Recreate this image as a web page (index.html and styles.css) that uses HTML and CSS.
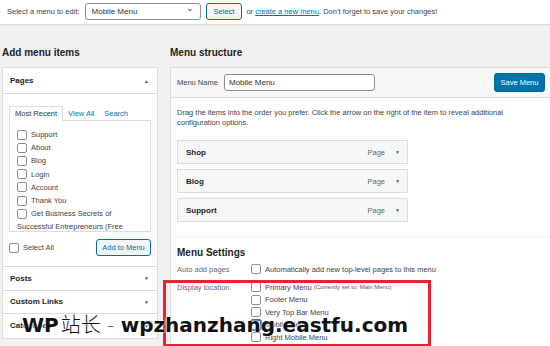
FILE: index.html
```html
<!DOCTYPE html>
<html lang="en">
<head>
  <meta charset="UTF-8">
  <title>Menus</title>
  <link rel="stylesheet" href="styles.css">
</head>
<body class="page">
  <div class="topbar">
    <span class="topbar__label">Select a menu to edit:</span>
    <span class="select">Mobile Menu<span class="select__chevron">&#8964;</span></span>
    <span class="btn btn--secondary">Select</span>
    <span class="topbar__text">or <a class="link" href="#">create a new menu</a>. Don&rsquo;t forget to save your changes!</span>
  </div>

  <div class="columns">
    <div class="col col--left">
      <h2 class="col__title">Add menu items</h2>
      <div class="box">
        <div class="box__head">Pages<span class="box__arrow">&#9650;</span></div>
        <div class="box__inner">
          <div class="tabs">
            <span class="tabs__tab tabs__tab--active">Most Recent</span>
            <span class="tabs__tab">View All</span>
            <span class="tabs__tab">Search</span>
          </div>
          <ul class="tabs__panel">
            <li class="check"><input class="check__box" type="checkbox">Support</li>
            <li class="check"><input class="check__box" type="checkbox">About</li>
            <li class="check"><input class="check__box" type="checkbox">Blog</li>
            <li class="check"><input class="check__box" type="checkbox">Login</li>
            <li class="check"><input class="check__box" type="checkbox">Account</li>
            <li class="check"><input class="check__box" type="checkbox">Thank You</li>
            <li class="check"><input class="check__box" type="checkbox">Get Business Secrets of</li>
            <li class="check">Successful Entrepreneurs (Free</li>
          </ul>
          <div class="box__actions">
            <label class="check"><input class="check__box" type="checkbox">Select All</label>
            <span class="btn btn--secondary btn--add">Add to Menu</span>
          </div>
        </div>
        <div class="box__head box__head--closed">Posts<span class="box__arrow">&#9660;</span></div>
        <div class="box__head box__head--closed">Custom Links<span class="box__arrow">&#9660;</span></div>
        <div class="box__head box__head--closed">Categories<span class="box__arrow">&#9660;</span></div>
      </div>
    </div>

    <div class="col col--right">
      <h2 class="col__title">Menu structure</h2>
      <div class="menu">
        <div class="menu__head">
          <span class="menu__label">Menu Name</span>
          <span class="menu__input">Mobile Menu</span>
          <span class="btn btn--primary">Save Menu</span>
        </div>
        <div class="menu__body">
          <p class="menu__desc">Drag the items into the order you prefer. Click the arrow on the right of the item to reveal additional configuration options.</p>
          <div class="item"><span class="item__title">Shop</span><span class="item__type">Page</span><span class="item__arrow">&#9660;</span></div>
          <div class="item"><span class="item__title">Blog</span><span class="item__type">Page</span><span class="item__arrow">&#9660;</span></div>
          <div class="item"><span class="item__title">Support</span><span class="item__type">Page</span><span class="item__arrow">&#9660;</span></div>

          <div class="settings">
            <h3 class="settings__title">Menu Settings</h3>
            <div class="settings__row">
              <span class="settings__label">Auto add pages</span>
              <div class="settings__opts">
                <label class="check"><input class="check__box" type="checkbox">Automatically add new top-level pages to this menu</label>
              </div>
            </div>
            <div class="settings__row">
              <span class="settings__label">Display location</span>
              <div class="settings__opts">
                <label class="check"><input class="check__box" type="checkbox">Primary Menu <span class="check__note">(Currently set to: Main Menu)</span></label>
                <label class="check"><input class="check__box" type="checkbox">Footer Menu</label>
                <label class="check"><input class="check__box" type="checkbox">Very Top Bar Menu</label>
                <label class="check"><input class="check__box check__box--focus" type="checkbox">Mobile Menu</label>
                <label class="check"><input class="check__box" type="checkbox">Right Mobile Menu</label>
              </div>
            </div>
          </div>
        </div>
      </div>
    </div>
  </div>

  <div class="highlight"></div>
  <div class="watermark">WP<span class="watermark__cjk">站长</span><span class="watermark__dash"> - </span>wpzhanzhang.eastfu.com</div>
</body>
</html>
```

FILE: styles.css
```css
*, *::before, *::after {
  box-sizing: border-box;
}

.page {
  margin: 0;
  width: 550px;
  height: 346px;
  overflow: hidden;
  position: relative;
  background: #f1f1f1;
  font-family: "Liberation Sans", Arial, sans-serif;
  font-size: 7.5px;
  color: #3c434a;
}

.link {
  color: #0073aa;
}

.topbar {
  height: 25px;
  background: #fff;
  border-bottom: 1px solid #dcdcde;
  box-shadow: 0 1px 1px rgba(0, 0, 0, 0.04);
  display: flex;
  align-items: center;
  padding: 0 0 2px 7px;
}

.topbar__label {
  margin-right: 5px;
}

.select {
  width: 116px;
  height: 17px;
  border: 1px solid #8c8f94;
  border-radius: 3px;
  display: flex;
  align-items: center;
  justify-content: space-between;
  padding: 0 6px 0 6px;
  font-size: 8px;
  color: #2c3338;
  margin-right: 5px;
}

.select__chevron {
  font-size: 9px;
  line-height: 1;
  margin-top: -5px;
}

.btn {
  display: inline-flex;
  align-items: center;
  justify-content: center;
  border-radius: 3px;
  font-size: 7.5px;
  white-space: nowrap;
}

.btn--secondary {
  height: 17px;
  padding: 0 7px;
  border: 1px solid #0071a1;
  background: #f3f5f6;
  color: #0071a1;
}

.topbar__text {
  margin-left: 4px;
}

.columns {
  display: flex;
  gap: 12px;
  padding: 0 0 0 2px;
}

.col--left {
  width: 156px;
  flex: none;
}

.col--right {
  width: 390px;
  flex: none;
}

.col__title {
  margin: 0;
  padding: 21px 0 0;
  height: 42px;
  font-size: 10px;
  font-weight: 600;
  color: #1d2327;
  line-height: 14px;
}

.box {
  background: #fff;
  border: 1px solid #dcdcde;
}

.box__head {
  height: 26px;
  display: flex;
  align-items: center;
  justify-content: space-between;
  padding: 0 8px 0 7px;
  font-size: 8px;
  font-weight: 700;
  color: #1d2327;
  border-bottom: 1px solid #dcdcde;
}

.box__head--closed {
  height: 23.5px;
}

.box__head:last-child {
  border-bottom: 0;
}

.box__arrow {
  font-size: 5px;
  color: #50575e;
}

.box__inner {
  padding: 12px 6px 10px 6px;
  border-bottom: 1px solid #dcdcde;
}

.tabs {
  display: flex;
  align-items: flex-end;
  height: 14px;
}

.tabs__tab {
  padding: 0 5px;
  color: #0073aa;
  line-height: 13px;
}

.tabs__tab--active {
  color: #2c3338;
  background: #fff;
  border: 1px solid #dcdcde;
  border-bottom: 0;
  height: 15px;
  margin-bottom: -1px;
  position: relative;
}

.tabs__panel {
  list-style: none;
  margin: 0;
  height: 112px;
  overflow: hidden;
  padding: 7px 7px 0;
  border: 1px solid #dcdcde;
}

.check {
  display: flex;
  align-items: center;
  height: 13.2px;
  white-space: nowrap;
}

.check__box {
  appearance: none;
  -webkit-appearance: none;
  width: 10px;
  height: 10px;
  margin: 0 4px 0 0;
  border: 1px solid #8c8f94;
  border-radius: 2px;
  background: #fff;
  flex: none;
}

.check__box--focus {
  border-color: #2271b1;
  box-shadow: 0 0 0 1px #2271b1;
}

.check__note {
  font-size: 6px;
  color: #50575e;
  margin-left: 2px;
}

.box__actions {
  display: flex;
  align-items: center;
  justify-content: space-between;
  margin-top: 7px;
}

.btn--add {
  width: 55px;
  padding: 0;
}

.menu {
  background: #fff;
  border: 1px solid #dcdcde;
  height: 320px;
}

.menu__head {
  height: 30px;
  background: #f6f7f7;
  border-bottom: 1px solid #dcdcde;
  display: flex;
  align-items: center;
  padding: 0 6px;
}

.menu__label {
  width: 47px;
  flex: none;
}

.menu__input {
  width: 151px;
  height: 17px;
  border: 1px solid #8c8f94;
  border-radius: 3px;
  background: #fff;
  display: flex;
  align-items: center;
  padding: 0 4px;
  color: #2c3338;
  font-size: 8px;
}

.btn--primary {
  margin-left: auto;
  margin-right: 8px;
  width: 51px;
  height: 19px;
  background: #0073aa;
  border: 1px solid #006799;
  color: #fff;
}

.menu__body {
  padding: 10px 6px 0;
}

.menu__desc {
  margin: 0 0 12px;
  line-height: 10px;
  width: 345px;
}

.item {
  width: 231px;
  height: 24px;
  margin-bottom: 5px;
  background: #f6f7f7;
  border: 1px solid #dcdcde;
  display: flex;
  align-items: center;
  padding: 0 7px 0 8px;
}

.item__title {
  font-size: 8px;
  font-weight: 700;
  color: #1d2327;
  flex: 1;
}

.item__type {
  color: #646970;
  margin-right: 10px;
}

.item__arrow {
  font-size: 5px;
  color: #50575e;
}

.settings {
  margin-top: 14px;
  margin-right: -10px;
  border-top: 1px solid #f0f0f1;
  padding-top: 9px;
}

.settings__title {
  margin: 0 0 3px;
  font-size: 10px;
  font-weight: 600;
  line-height: 14px;
  color: #1d2327;
}

.settings__row {
  display: flex;
  margin-bottom: 5px;
}

.settings__label {
  width: 74px;
  flex: none;
  color: #646970;
  line-height: 13px;
}

.settings__opts .check {
  height: 12.5px;
}

.highlight {
  position: absolute;
  left: 163px;
  top: 280px;
  width: 268px;
  height: 66px;
  border: 3px solid #e8232f;
  border-bottom-width: 2px;
}

.watermark {
  position: absolute;
  left: 22px;
  top: 312px;
  font-family: "DejaVu Sans", "Noto Sans CJK SC", sans-serif;
  font-weight: 700;
  font-size: 20px;
  line-height: 24px;
  color: #111;
  white-space: nowrap;
  text-shadow: 0 0 2px #fff, 0 0 2px #fff;
}

.watermark__cjk {
  font-family: "Noto Sans CJK SC", sans-serif;
  font-weight: 300;
  margin-left: 2px;
}

.watermark__dash {
  font-weight: 300;
  color: #444;
}
```
